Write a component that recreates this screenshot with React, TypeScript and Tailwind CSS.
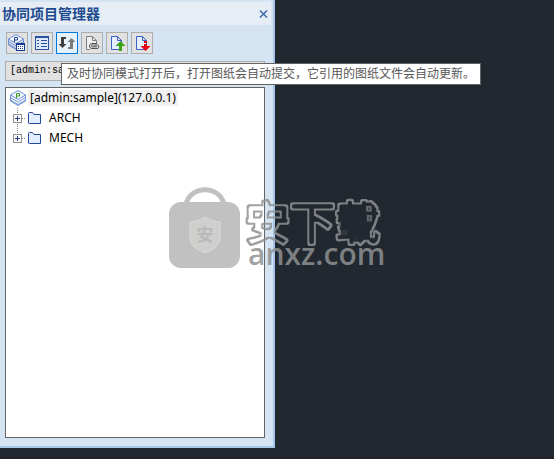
import type { ReactNode } from "react";

const tools: { label: string; active?: boolean; icon: ReactNode }[] = [
  { label: "项目设置", icon: <ProjectTableIcon /> },
  { label: "列表", icon: <ListIcon /> },
  { label: "及时协同模式", active: true, icon: <SyncIcon /> },
  { label: "外部参照", icon: <LinkPageIcon /> },
  { label: "提交", icon: <UploadIcon /> },
  { label: "更新", icon: <DownloadIcon /> },
];

function StackIcon() {
  return (
    <>
      <path d="M.500 5 8 .500 15.500 5 8 9.500Z" fill="#f4f8ff" stroke="#6c8fdb" />
      <path
        d="M.500 7.500 8 12l7.500-4.500M.500 10 8 14.500l7.500-4.500M.500 5v6L8 15.500l7.500-4.500V5"
        fill="none"
        stroke="#6c8fdb"
      />
    </>
  );
}

function ProjectTableIcon() {
  return (
    <svg className="size-4.5" viewBox="0 0 18 18" fill="none">
      <StackIcon />
      <path d="M6.500 8V3.500h3v2.500h-3" stroke="#2b4ea0" />
      <rect x="8.500" y="9.500" width="8" height="7" fill="#fff" stroke="#123b8e" />
      <path d="M8 10h9" stroke="#123b8e" strokeWidth="2" />
      <path d="M10 12.500h6M10 14.500h6" stroke="#123b8e" strokeDasharray="1 1" />
    </svg>
  );
}

function ListIcon() {
  return (
    <svg className="size-4.5" viewBox="0 0 18 18" fill="none">
      <rect x="2.500" y="2.500" width="13" height="13" fill="#dce8fc" stroke="#2a50a4" />
      <path d="M2 3h14" stroke="#2a50a4" strokeWidth="2" />
      <path
        d="M4 6.500h2M4 9.500h2M4 12.500h2M8 6.500h6M8 9.500h6M8 12.500h6"
        stroke="#2a50a4"
      />
    </svg>
  );
}

function SyncIcon() {
  return (
    <svg className="size-4.5" viewBox="0 0 18 18">
      <path d="M8 3v2H6v5h2.500l-4 4-4-4H3V3Z" fill="#404040" />
      <path d="M10 15v-2h2V8H9.500l4-4 4 4H15v7Z" fill="#7b7b7b" />
    </svg>
  );
}

function LinkPageIcon() {
  return (
    <svg className="size-4.5" viewBox="0 0 18 18" fill="none">
      <path
        d="M7 15.500H3.500v-13h6l4 4V9M9.500 2.500v4h4"
        fill="#f0f0f0"
        stroke="#808080"
      />
      <path
        d="M14 9.500H9a2.500 2.500 0 0 0 0 5h5.500a1.800 1.800 0 0 0 0-3.500H9.500c-1.500 0-1.500 1.800 0 1.800H14"
        stroke="#404040"
        strokeWidth=".9"
      />
    </svg>
  );
}

function BluePage() {
  return (
    <path
      d="M3.500 2.500h6l4 4v9h-10Zm6 0v4h4"
      fill="#e4eeff"
      stroke="#3a60c4"
    />
  );
}

function UploadIcon() {
  return (
    <svg className="size-4.5" viewBox="0 0 18 18">
      <BluePage />
      <path d="m12.500 7 5 5H14v5h-3v-5H7.500Z" fill="#3da315" />
    </svg>
  );
}

function DownloadIcon() {
  return (
    <svg className="size-4.5" viewBox="0 0 18 18">
      <BluePage />
      <path d="M11 7h3v2h-3Zm0 3h3v2h3.500l-5 5-5-5H11Z" fill="#e60012" />
    </svg>
  );
}

function FolderIcon() {
  return (
    <svg className="size-4" viewBox="0 0 16 16">
      <path
        d="M2.500 13V3.500q0-1 1-1h3l1.500 2h6.500v9h-11q-1 0-1-.5Z"
        fill="#e2eeff"
        stroke="#23479b"
      />
    </svg>
  );
}

function TreeNode({ name, last = false }: { name: string; last?: boolean }) {
  return (
    <li className="flex h-5 items-center">
      <svg className="h-5 w-4 shrink-0" viewBox="0 0 16 20" fill="none">
        <path
          d={last ? "M7.500 0v6" : "M7.500 0v20"}
          stroke="#888"
          strokeDasharray="1 1"
        />
        <path d="M12 10.500h4" stroke="#888" strokeDasharray="1 1" />
        <rect x="3.500" y="6.500" width="8" height="8" fill="#f8f8f8" stroke="#919191" />
        <path d="M5 10.500h5M7.500 8v5" stroke="#27408b" />
      </svg>
      <FolderIcon />
      <span className="ml-[7px]">{name}</span>
    </li>
  );
}

function Watermark() {
  return (
    <svg
      className="pointer-events-none absolute top-[186px] left-[168px] h-[94px] w-[224px]"
      viewBox="0 0 224 94"
    >
      <filter id="hollow" x="-5%" y="-10%" width="110%" height="120%">
        <feMorphology in="SourceGraphic" operator="erode" radius="2" result="inner" />
        <feComposite in="SourceGraphic" in2="inner" operator="out" />
      </filter>
      <path d="M18 18C23-1 51-1 56 18" fill="none" stroke="#c1c1c1" strokeWidth="5" />
      <rect x="1" y="16" width="71" height="66" rx="12" fill="#c1c1c1" />
      <path
        d="M37 31q8 5 15 5v17q-1 9-15 14-14-5-15-14V36q7 0 15-5Z"
        fill="#cfcfcd"
        stroke="#dadada"
      />
      <text
        x="37"
        y="55"
        textAnchor="middle"
        fontSize="17"
        fontWeight="700"
        fill="#b9b9b9"
        className="font-['Noto_Sans_CJK_SC',sans-serif]"
      >
        安
      </text>
      <text
        x="77"
        y="54"
        fontSize="45"
        fontWeight="400"
        fill="#8f9193"
        stroke="#8f9193"
        strokeWidth="5"
        strokeLinejoin="round"
        filter="url(#hollow)"
        opacity=".85"
        className="font-['Noto_Sans_CJK_SC',sans-serif]"
      >
        安下载
      </text>
      <text
        x="80"
        y="79"
        fontSize="30"
        fontWeight="600"
        fill="#8f9193"
        fillOpacity=".85"
        className="font-['Open_Sans',sans-serif]"
      >
        anxz.com
      </text>
    </svg>
  );
}

export default function App() {
  return (
    <main className="relative min-h-screen border-b-2 border-[#251f2c] bg-[#22282f] font-['Noto_Sans','Noto_Sans_CJK_SC',sans-serif] text-xs text-black">
      <section className="flex h-[calc(100vh-11px)] w-1/2 max-w-[275px] flex-col border-r-2 border-b-2 border-[#a6c6e9] bg-[#d5e4f2] pt-0.5">
        <header className="mr-0.5 flex h-[23px] shrink-0 items-center justify-between bg-[#e6edf5]">
          <h1 className="pl-0.5 text-sm font-bold text-[#1e4b8f]">协同项目管理器</h1>
          <button aria-label="关闭" className="p-0.5">
            <svg className="size-2.5" viewBox="0 0 10 10" stroke="#3d6cab" strokeWidth="1.500">
              <path d="m1 1.500 7 7m0-7-7 7" />
            </svg>
          </button>
        </header>
        <div className="mt-[7px] flex gap-[3px] pl-1.5">
          {tools.map((tool) => (
            <button
              key={tool.label}
              aria-label={tool.label}
              className={`flex size-[22px] items-center justify-center border ${tool.active ? "border-[#0078d7] bg-[#e5f1fb]" : "border-[#adadad] bg-[#e1e1e1]"}`}
            >
              {tool.icon}
            </button>
          ))}
        </div>
        <select
          aria-label="项目"
          className="mt-[7px] mr-2 ml-[5px] h-5 shrink-0 appearance-none border border-[#adadad] bg-[#e1e1e1] px-1 font-['Liberation_Mono',monospace] text-[10px]"
        >
          <option>[admin:sample](127.0.0.1)</option>
        </select>
        <div className="mt-1.5 mr-2 mb-2 ml-[5px] flex-1 border border-[#646464] bg-white pl-1">
          <div className="flex h-5 items-center">
            <svg className="size-4" viewBox="0 0 16 16">
              <StackIcon />
              <path d="M6.500 8V3.500h3v2.500h-3" fill="none" stroke="#3b9b22" />
            </svg>
            <span className="ml-0.5 bg-[#f0f0f0] px-0.5">[admin:sample](127.0.0.1)</span>
          </div>
          <ul>
            <TreeNode name="ARCH" />
            <TreeNode name="MECH" last />
          </ul>
        </div>
      </section>
      <div
        role="tooltip"
        className="absolute top-[63px] left-[61px] flex h-[22px] items-center border border-[#646464] bg-white px-[5px] whitespace-nowrap text-[#575757]"
      >
        及时协同模式打开后，打开图纸会自动提交，它引用的图纸文件会自动更新。
      </div>
      <Watermark />
    </main>
  );
}
